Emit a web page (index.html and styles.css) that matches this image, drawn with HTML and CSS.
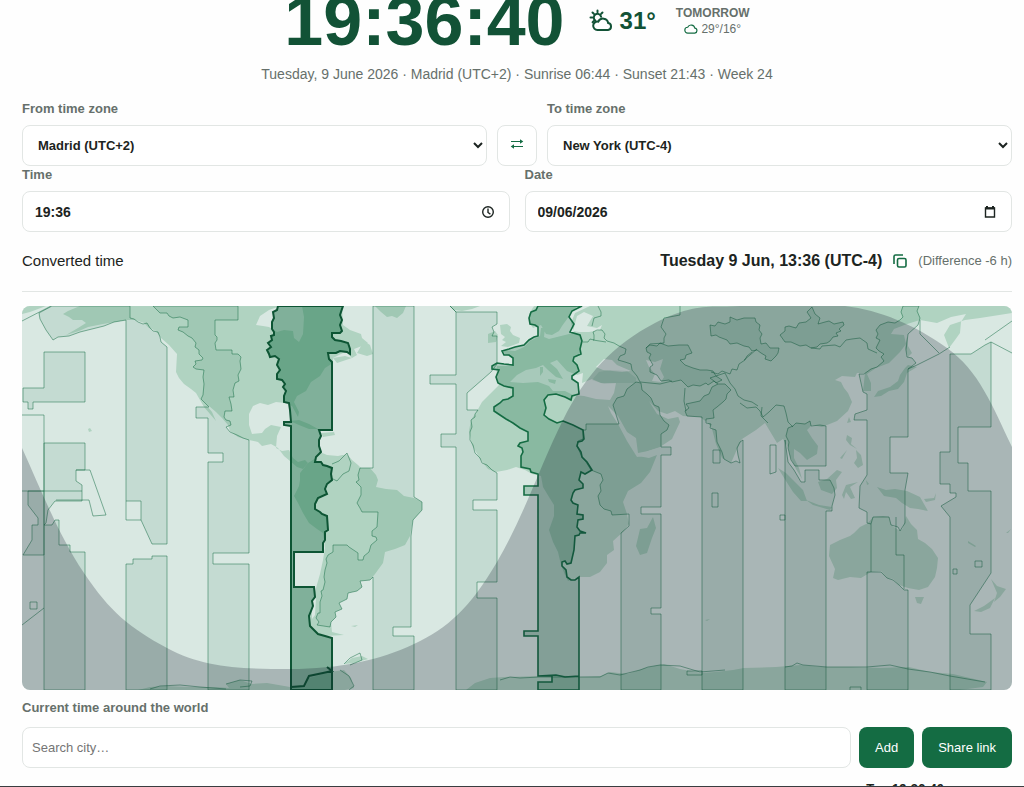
FILE: index.html
```
<!DOCTYPE html>
<html lang="en">
<head>
  <meta charset="UTF-8" />
  <meta name="viewport" content="width=device-width, initial-scale=1" />
  <title>Time Zone Converter</title>
  <link rel="stylesheet" href="styles.css">
</head>
<body>
  <main class="page">
    <header class="hero">
      <div class="clock">19:36:40</div>
      <div class="weather">
        <svg class="weather-icon" viewBox="0 0 24 24"><path d="M8.500 1.500v1.800M3.500 3.500l1.300 1.300M1.500 8.500h1.800M13.500 3.500l-1.300 1.300M3.600 13.200l1.200-1.200M6.300 11.500a3.700 3.700 0 1 1 5.800-3.800"/><path d="M8.500 21a4.200 4.200 0 1 1 .8-8.300 5.200 5.200 0 0 1 9.900 1.400A3.500 3.500 0 0 1 19 21z"/></svg>
        <span>31°</span>
      </div>
      <div class="tomorrow">
        <strong>TOMORROW</strong>
        <span><svg class="cloud-icon" viewBox="0 0 24 24"><path d="M6.500 19a5 5 0 0 1-.2-10 6.500 6.500 0 0 1 12.300 1.500A4.300 4.300 0 0 1 18.500 19z"/></svg>29°/16°</span>
      </div>
    </header>
    <p class="meta">Tuesday, 9 June 2026 · Madrid (UTC+2) · Sunrise 06:44 · Sunset 21:43 · Week 24</p>

    <div class="zones">
      <div class="group">
        <label for="fromZone">From time zone</label>
        <select id="fromZone"><option>Madrid (UTC+2)</option></select>
      </div>
      <button class="swap" type="button" aria-label="Swap time zones">
        <svg viewBox="0 0 14 12"><path d="M1 3.500h11M2 8.500h11"/><path class="head" d="M10 1.300l3.300 2.200L10 5.700zM4 6.300L.7 8.500 4 10.700z"/></svg>
      </button>
      <div class="group">
        <label for="toZone">To time zone</label>
        <select id="toZone"><option>New York (UTC-4)</option></select>
      </div>
    </div>

    <div class="when">
      <div class="group">
        <label for="time">Time</label>
        <div class="field">
          <input type="text" id="time" value="19:36" />
          <svg viewBox="0 0 14 14"><circle cx="7" cy="7" r="5.300"/><path d="M7 3.500v4l2.400 1.600"/></svg>
        </div>
      </div>
      <div class="group">
        <label for="date">Date</label>
        <div class="field">
          <input type="text" id="date" value="09/06/2026" />
          <svg viewBox="0 0 14 14"><path d="M2.500 3h9v9h-9z"/><path d="M2 3.500h10M4 1v2M10 1v2" stroke-width="2"/></svg>
        </div>
      </div>
    </div>

    <div class="converted">
      <span>Converted time</span>
      <div class="result">
        <strong>Tuesday 9 Jun, 13:36 (UTC-4)</strong>
        <button class="copy" type="button" aria-label="Copy">
          <svg viewBox="0 0 14 14"><rect x="4.500" y="4.500" width="8.500" height="8.500" rx="1.500"/><path d="M1 10V2.500A1.500 1.500 0 0 1 2.500 1H10"/></svg>
        </button>
        <span class="diff">(Difference -6 h)</span>
      </div>
    </div>

    <svg class="map" viewBox="22 306 990 384" role="img" aria-label="World time zones">
      <rect class="sea" x="22" y="306" width="990" height="384"/>

      <!-- continents -->
      <g class="land">
        <path d="M22 306H46L38 309 30 312 22 314Z"/>
        <path d="M80 306L68 311 63 314 69 317 73 320 82 320 86 323 78 328 66 335 79 331 88 327 103 324 115 322 126 320 135 320 144 323 149 328 156 331 161 338 169 345 177 354 176 372 179 378 184 384 191 389 196 393 200 400 204 407 210 414 216 421 212 412 207 406 209 406 216 412 222 418 228 425 230 431 238 437 249 440 258 442 262 446 271 444 278 448 284 456 290 461 297 467 303 469 308 463 305 460 298 462 293 458 289 450 282 451 276 448 277 436 281 427 271 425 265 429 262 433 252 434 249 425 249 414 253 406 260 403 268 405 276 402 285 403 292 406 298 417 299 412 294 402 297 396 306 391 311 382 320 376 325 368 333 363 333 358 343 353 347 353 352 358 357 355 354 349 362 346 368 343 362 338 361 334 350 330 343 325 342 306Z"/>
        <path d="M364 341L370 345 373 354 367 356 357 353ZM333 358L345 356 352 358 337 363Z"/>
        <path d="M375 306H406L403 313 397 318 392 316 387 317 381 312Z"/>
        <path d="M290 421L299 420 309 424 318 429 309 429 299 425ZM321 433L334 432 335 435 323 437Z"/>
        <path d="M300 473L308 463 316 458 320 452 327 455 338 456 347 454 352 460 358 465 361 468 370 468 376 475 378 480 376 487 386 489 397 490 404 496 414 498 422 502 422 510 413 520 411 530 410 536 405 545 395 549 385 552 383 563 375 574 370 580 360 581 362 587 357 591 348 593 347 599 339 603 342 609 335 612 336 617 331 622 332 632 344 635 325 636 316 632 310 625 309 617 313 600 316 588 320 574 323 560 325 548 323 533 317 529 309 523 303 513 298 503 294 496 299 486 300 480Z"/>
        <path d="M351 626l7-1-3 2zM450 306H480L472 309 462 311 454 310Z"/>
        <path d="M500 325L507 324 511 327 510 331 513 335 520 338 519 343 508 347 501 346 506 342 502 340 505 337 501 334ZM488 334L495 331 498 335 496 342 488 343Z"/>
        <path d="M534 306L529 314 529 322 533 328 541 325 546 334 552 335 559 331 562 326 570 315 577 306ZM590 306L575 313 571 323 574 332 569 334 557 337 549 339 544 337 545 328 541 328 540 336 530 341 524 347 515 351 503 350 505 354 513 358 513 366 497 366 496 378 499 385 490 394 482 402 477 411 471 420 469 431 472 445 480 459 488 469 496 472 507 470 516 467 525 470 532 474 541 476 543 487 549 497 554 505 554 516 549 530 553 542 558 552 561 565 565 575 568 581 579 577 590 577 600 572 607 563 607 555 614 550 613 541 623 532 629 524 627 514 623 502 628 491 641 483 650 472 657 455 649 458 638 456 648 451 660 447 672 439 680 422 678 416 671 413 682 416 700 417 708 423 712 429 716 444 722 458 731 463 738 447 742 439 756 430 765 423 771 433 777 443 783 439 788 447 790 456 796 469 802 479 799 468 794 458 794 449 800 453 807 460 817 454 818 446 812 438 807 430 812 425 822 427 837 421 848 411 852 402 848 393 844 388 841 382 835 380 842 376 855 377 857 373 865 373 863 391 871 391 871 383 867 374 876 368 889 363 900 352 906 344 904 335 891 334 894 329 907 324 920 320 937 323 951 317 966 314 961 322 960 333 955 340 949 348 944 335 950 325 965 320 980 318 1012 313V306Z"/>
        <path d="M907 337L908 346 912 353 908 357 905 348ZM905 368L908 365 917 367 907 373 904 382 898 389 889 391 881 396 874 397 878 391 890 387 898 381 900 375Z"/>
        <path d="M847 435L852 438 851 444 857 449 850 445 846 440ZM856 450L861 455 863 465 858 468 854 463 857 458ZM840 458L847 450 842 459ZM849 417L851 422 847 423Z"/>
        <path d="M778 468L786 473 793 480 803 490 807 501 801 501 793 492 786 481ZM806 500L819 505 832 507 830 510 813 505ZM818 482L827 479 837 470 842 472 836 480 837 488 832 494 821 490ZM846 485L858 482 850 487 855 498 851 499 846 492 844 499 842 495ZM877 487L886 490 895 489 907 491 920 497 928 511 918 509 910 508 902 503 896 498 884 496ZM866 480l3 4-2 1zM924 499l10-1 2-5-1 7-9 2z"/>
        <path d="M830 545L840 540 850 536 854 533 860 527 868 523 873 517 883 516 889 517 891 525 900 531 903 528 906 516 911 524 917 530 918 539 925 543 932 549 938 558 937 568 935 577 928 587 919 590 908 588 899 585 893 579 887 578 881 571 871 572 861 578 850 577 838 580 833 578 835 569 829 556ZM915 597L924 597 921 604 917 603ZM991 579L997 586 1006 589 1000 597 994 602 997 593ZM995 598L990 608 981 612 974 611 984 606Z"/>
        <path d="M653 517L656 528 652 538 647 553 640 555 636 546 640 529 647 528Z"/>
        <path d="M138 690L150 687 167 686 190 687 215 687 229 688 226 684 240 680 252 684 267 683 290 687 305 687 309 678 330 672 344 670 351 678 354 688 345 690ZM466 690L475 683 490 678 504 677 538 676 557 675 579 677 601 676 610 672 628 674 645 668 664 664 680 669 702 673 715 672 733 670 744 668 776 667 800 665 819 667 850 667 880 668 909 667 930 672 953 674 970 678 987 682 983 687 960 690ZM344 664l8-6 10-2 6 3-14 4z"/>
        <path d="M88 429l2-1 2 3-3 1zM705 620l5-1-3 2zM968 541l8 5-1 1-7-4zM1006 533l5-4-3 4z"/>
      </g>

      <!-- inland seas and gulfs -->
      <g class="sea">
        <path d="M256 325L260 316 269 310 280 306H302L304 317 303 334 299 342 294 338 293 331 284 330 277 332 269 327 263 326Z"/>
        <path d="M510 382L517 375 526 370 536 368 543 365 548 370 556 377 563 379 557 369 550 363 557 360 567 371 577 375 583 373 582 383 592 379 601 383 616 383 614 393 610 400 596 399 584 396 573 395 565 391 553 391 549 386 538 382 523 383Z"/>
        <path d="M596 367L604 359 612 360 617 365 631 371 622 372 603 370ZM646 360L655 362 663 359 660 369 664 377 661 382 652 381 655 374 649 367Z"/>
        <path d="M608 406L618 416 627 432 636 438 638 453 648 451 662 447 659 454 637 457 627 441 618 424 611 413ZM649 401L658 411 667 414 675 411 683 416 668 419 657 414Z"/>
        <path d="M577 316L584 312 593 316 587 326 597 328 602 325 600 330 589 332 579 332 573 331Z"/>
        <path d="M312 600l4-2-1 17-3 4zM328 452l18-1-2 4-14-1z"/>
      </g>
      <path class="land" d="M540 367l3 0 0 5-3 4zM548 379l8 1-1 4-6-2z"/>

      <!-- every other hour band -->
      <g class="band">
        <path d="M44 352H85V402H33V409H28V402H23V388H44Z"/>
        <path d="M44 443H85V470H76V481L82 485V501H55L48 510 46 523 44 525 52 525 55 520H59V545H70V552H85V690H44Z"/>
        <path d="M22 491H82M28 491V505L38 518V525H32V540L23 555H44V491Z"/>
        <path d="M52 306L39 313 40 319 46 330 53 340 58 337 69 336 80 332 92 329 104 326 114 322 126 320V501H141V520L152 544H167V347L161 342 160 337 158 332 153 331 150 328 147 323 143 324 138 322 134 319 130 318V306Z"/>
        <path d="M126 564H133V559H152V556H167V690H126Z"/>
        <path d="M153 306L156 309 160 313 167 313 169 316 173 318 180 317 188 320V327H179L178 330 183 332 188 336 192 338 196 343 195 347 199 350 199 354 203 358 202 360 195 361 196 364 193 367 196 369 204 370 203 377 204 384 203 395 201 399 209 407H196V418H208V453H223V462H208V690H249V564H213V553H249V440L243 438 237 435 230 432 226 427 231 425 230 421 226 420 224 417 225 411H232L231 404 229 397H234L233 390 235 383 239 381 238 375 241 369 240 361 241 357 238 354 232 354V350H216L215 343 217 340 217 337 215 335 215 320H238V306Z"/>
        <path d="M373 306H414V497L422 502 422 510 413 520 411 536V627H393V636H414V690H373V577L370 580 360 581 362 587 357 591 348 593 347 599 339 603 342 609 335 612 336 617 331 622 330 627 317 625 319 622 316 618 318 613 320 613 320 602 322 596 321 591 323 590 325 582 324 577 325 570 327 563 326 559 328 555 333 552 333 545H347L349 547 352 549 358 553V560H363L364 556 369 552 371 545 377 540 376 537 372 536 372 531 377 527 378 512H362L360 508 357 503 361 495 361 487 356 482 359 480 358 475 360 468H373Z"/>
        <path d="M450 306L456 312H497V324L492 327 494 332 492 336 497 336V364L491 372 467 393V410H478L475 414 475 417 471 420 472 427 470 432 470 440 473 445 475 453 480 458 482 463 487 465 492 470 497 473V500H473V510H497V582H477V598H497V690H456V447H441V434H456V384H430V375H456V312Z"/>
        <path d="M586 424H619L613 405 617 398 624 396 627 389 636 382 641 383 642 390 647 394 651 398 654 405 659 407 660 415 664 421 669 425 667 430 661 434V447H671V455H661V507H641V514H661V608H651V614H661V690H621V533L629 526 629 514 612 515 611 511 604 509 600 505 598 496 601 491 600 485 603 480 601 474 591 470 586 462 582 457 577 446 578 441 583 439V430H586Z"/>
        <path class="plain" d="M592 380L599 372 610 370 627 371 636 378 636 383 618 383 604 384Z"/>
        <path d="M646 348L650 345 657 346 660 343 668 346 679 345 688 345 690 349 692 353 686 355 685 359 680 360 685 365 693 368 700 370 707 370 713 371 716 376 722 380 716 383 714 381 708 385 706 383 700 386 693 385 688 387 681 380 672 382 669 380 661 381 657 375 650 372 650 367 653 365 649 358 651 354 647 352Z"/>
        <path d="M702 417L687 416 685 411 689 408 686 404 700 401 704 396 709 394 712 387 718 384 725 384 731 390 727 394 726 399 723 402 717 407 713 410 714 418 706 419 706 423 711 424 710 428 716 430 717 442 722 452 724 459 731 463 736 461 740 463 738 455 737 448 740 442 743 440V690H702Z"/>
        <path d="M710 325L715 326 718 322 725 324 730 322 730 317 737 320 744 318 755 318 756 322 760 325 759 330 762 334 760 338 761 344 766 343 770 348 779 348 778 353 776 356 771 361 765 359 766 356 761 353 757 350 752 351 749 347 744 346 737 343 730 344 727 340 719 337 716 335 711 336Z"/>
        <path d="M780 335L785 331 785 327 789 326 796 328 799 323 806 322 811 318 807 312 812 307 815 314 820 318 818 324 825 322 829 321 834 324 843 322 844 325 839 329 841 331 836 333 838 336 833 337 830 341 827 343 820 344 817 347 811 348 806 345 800 346 791 342 785 342Z"/>
        <path d="M788 428L793 426 796 423 805 424 810 421 811 426 820 425 826 426V466H795L791 460 788 448 789 442 786 436ZM785 440V690H826V511H832V506L835 495 834 488 830 480H819V470H805V482H801L794 470 788 462Z"/>
        <path d="M880 325L888 322 895 323 900 320 903 317 901 312 903 306H919L917 311 920 318 918 325 908 334 906 350 907 357 912 358 916 363 908 369V437H890V473H908L905 490V523L900 531 898 527 891 525 889 517H873L871 524 867 523V512L859 508 860 486 867 475V420H854L855 414 867 410V394L863 392 859 374 864 374 871 369 877 367 884 361 881 357 884 354 879 351 876 348 880 340 876 338 878 334 876 330Z"/>
        <path d="M867 572H881L887 578 893 580 899 585 904 590 908 590V690H867Z"/>
        <path d="M950 354H971L985 345 991 342V427H958V463H968V491H991V573L970 605V634H991V690H950V517L941 506 956 497V493H950V484H940V452H950Z"/>
        <path class="line" d="M22 321L51 306M22 415H44V491M76 470H90L106 515 93 516 89 500H56M126 501V520H141M22 625L44 608M30 602h7v7h-7zM1012 321L985 340M991 342L1012 353M920 320V334L939 353M908 369L917 365 939 354 950 347M713 450h7v13h-7zM712 493h6v14h-6zM770 445h6v27l-6 2zM780 515h5v5h-5zM953 569h4v5h-4zM975 561h7v6h-7zM871 524V572M896 517V555H904V589"/>
        <path class="line" d="M332 464L339 461 347 453 351 463 349 471 343 474 337 481 331 478M583 342L588 342 590 339 594 340 594 335 593 332 597 330 602 330 605 334 604 338 607 341 614 343 619 346 626 349 625 354 620 356 618 360 625 362 631 364 632 370 637 376 640 382M593 340L606 342M592 326L594 318 601 316 601 312 598 306M646 348L650 344 664 343 664 338 666 334 661 327 664 318 680 315V306M711 372L718 374 722 371 730 374 732 369 737 370 739 364 745 360 747 356 752 352M718 384L710 378 725 373 730 383 735 389 738 396 744 400 752 402 758 406M740 403L747 408 756 407 760 411 763 417 769 412 776 405 784 406 786 413 788 422 793 427M762 407L761 416 768 423M811 348L820 349 822 346 835 345 840 347 846 340 852 339 860 338 867 343 868 349 877 353M744 360L750 355 757 349M685 388L684 401 686 411M640 382L650 383 660 384 672 381"/>
        <path class="line" d="M150 689L160 686 180 685 200 687 226 689M226 684L240 680 252 681 250 686 240 687M500 680L510 677 520 678 540 677 578 677 600 677 608 673 620 675 640 670 648 667 660 665 680 666 700 672 725 670M687 671h15v4h-15zM785 667L792 666 797 663 803 665 827 667 867 667 890 665 908 669 930 672 950 676 985 682M850 690V687H861V690M344 664L350 658 360 653 362 660 350 665M340 670L349 676 354 686 349 690"/>
      </g>

      <!-- selected zones -->
      <path class="from" d="M538 306L536 310 531 312 529 318 530 324 535 325 538 327 538 336 534 337 529 340 524 345 515 347 509 349 502 351 504 355 509 355 513 358 513 365 504 364 497 363 492 366 492 369 499 370 496 377 498 383 504 386 513 388 513 396 508 399 503 400 500 403 494 407 494 411 500 415 506 419 513 423 520 428 528 432V441L520 443 518 446 522 448 523 452 521 456 521 467 530 469 531 472 538 474V486H524V495H538V631H524V636H538V676H552V682H538V690H579V577L575 580 571 580 567 577 566 570 562 566 562 562 565 561 567 564 571 563 574 550 575 536 579 535 580 533 586 533 580 531 577 527 578 520 583 519 583 515 577 514 578 505 573 503 571 500 573 493 575 490 583 488 583 484 579 480 581 472 585 474 592 470 587 462 582 457 581 452 577 446 578 442 582 441 584 439 583 430 573 425 563 421 557 423 549 419 544 415 546 408 544 400 548 395 556 394 565 397 571 400 572 396 579 394 578 383 572 379 572 376 579 371 577 365 573 361 574 357 581 354 580 349 582 341 580 335 570 332 574 324 569 317 572 311 582 306ZM563 421L573 425M538 676L556 675 565 677 579 676"/>
      <path class="to" d="M278 306L277 310 273 312 274 318 272 322 272 329 274 332 274 335 271 336 272 340 268 343 271 347 267 350 269 354 270 357 275 356 279 359 277 365 280 370 277 374 277 379 282 380 285 384 283 387 286 391 284 396 284 402 289 403 290 410 291 422 284 422 284 425 291 426V690H332V638L325 636 318 634 310 626 309 616 311 611 313 606 312 601 315 597 314 587H294V552H323L323 543 325 540 325 532 328 530 327 516 322 514 320 512 315 509 315 504 318 498 327 494 325 489 327 484 332 480 331 474 332 468 327 466 323 465 321 462 315 462 316 457 321 452 319 446 319 440 321 436 319 430H332V362L329 359 328 353 336 353 340 351 347 352 350 354 350 349 348 343 341 341 335 340 332 337 332 333 340 333 342 331 340 325 342 320 340 315 343 306ZM291 687L304 686 309 676 323 673 332 671 327 667"/>

      <path class="night" d="M22 448C42 492 58 534 84 573S130 628 167 648 240 669 290 669 380 660 414 644 470 608 497 562 540 466 563 420 613 345 655 323 715 308 740 306H845C880 310 915 325 947 348S992 405 1012 447V690H22Z"/>
    </svg>

    <label class="world-label" for="city">Current time around the world</label>
    <div class="search">
      <input type="text" id="city" placeholder="Search city…" />
      <button type="button">Add</button>
      <button type="button">Share link</button>
    </div>
    <div class="city-row"><strong>Tue 19:36:40</strong><span>↑</span><span>↓</span></div>
  </main>
</body>
</html>
```
FILE: styles.css
```
* { box-sizing: border-box; }
body {
  margin: 0;
  height: 100vh;
  overflow: hidden;
  border-bottom: 1px solid #3a3d40;
  background: #fefefe;
  color: #1c2421;
  font-family: "Liberation Sans", Arial, sans-serif;
  font-size: 13px;
}
.page { padding: 0 12px 0 22px; }

.hero {
  display: flex;
  justify-content: center;
  align-items: center;
  color: #125236;
}
.clock { font-size: 70px; line-height: 42px; font-weight: bold; }
.weather {
  display: flex;
  align-items: center;
  gap: 7px;
  margin: 0 20px 0 24px;
  font-size: 24px;
  font-weight: bold;
}
svg { fill: none; stroke: currentColor; }
.weather-icon { width: 24px; height: 24px; stroke-width: 2; stroke-linecap: round; }
.tomorrow {
  display: flex;
  flex-direction: column;
  align-items: center;
  font-size: 12px;
  line-height: 16px;
  color: #66706b;
}
.tomorrow span { display: flex; align-items: center; gap: 3px; }
.cloud-icon { width: 14px; height: 14px; color: #146c43; stroke-width: 2; }
.meta {
  margin: 23px 0 18px;
  font-size: 14px;
  line-height: 18px;
  text-align: center;
  color: #66706b;
}

label { display: block; font-weight: bold; line-height: 16px; color: #66706b; }
.group { flex: 1; min-width: 0; }
.zones { display: flex; align-items: flex-end; gap: 10px; }
.when { display: flex; gap: 15px; margin-top: 1px; }
select, .field, .swap, .search input {
  height: 41px;
  border: 1px solid #e2e6e4;
  border-radius: 8px;
  background: #fff;
}
select, .field { width: 100%; margin-top: 8px; }
select { font: bold 13px "Liberation Sans", Arial, sans-serif; color: #1c2421; }
select { display: block; padding: 0 0 0 11px; }
.swap {
  width: 40px;
  display: flex;
  align-items: center;
  justify-content: center;
  padding: 0 0 3px;
  color: #146c43;
}
.swap svg { width: 14px; height: 12px; }
.swap .head { fill: currentColor; stroke: none; }
.field { display: flex; align-items: center; padding: 0 14px 0 12px; }
.field input {
  flex: 1;
  min-width: 0;
  padding: 0;
  border: 0;
  outline: none;
  background: none;
  color: #1c2421;
  font: bold 14px "Liberation Sans", Arial, sans-serif;
}
.field svg { width: 14px; height: 14px; stroke-width: 1.4; }

.converted {
  display: flex;
  justify-content: space-between;
  align-items: center;
  padding: 19px 0 20px;
  border-bottom: 1px solid #e2e6e4;
  font-size: 15px;
  line-height: 20px;
}
.result { display: flex; align-items: center; gap: 11px; }
.result strong { font-size: 16px; }
.copy { display: flex; padding: 0; border: 0; background: none; color: #146c43; }
.copy svg { width: 14px; height: 14px; stroke-width: 1.6; }
.diff { font-size: 13px; color: #66706b; }

.map { display: block; width: 100%; margin: 14px 0 10px; border-radius: 8px; }
.map path, .map rect { stroke: none; }
.sea { fill: #d9e8e2; }
.land { fill: #b0d3c1; }
.map .band path { fill: rgba(20, 108, 67, 0.1); stroke: rgba(20, 108, 67, 0.5); stroke-width: 1; }
.map .band .line { fill: none; }
.map .band .plain { stroke: none; }
.map .from { fill: rgba(20, 108, 67, 0.25); stroke: #146c43; stroke-width: 1.6; }
.map .to { fill: rgba(20, 108, 67, 0.45); stroke: #0d5534; stroke-width: 2; }
.map .night { fill: rgba(15, 23, 42, 0.24); }

.world-label { margin-bottom: 11px; }
.search { display: flex; gap: 8px; }
.search input { flex: 1; min-width: 0; padding: 0 9px; font: 13px "Liberation Sans", Arial, sans-serif; }
.search input::placeholder { color: #757575; }
.search button {
  height: 41px;
  padding: 0 16px;
  border: 0;
  border-radius: 8px;
  background: #146c43;
  color: #fff;
  font: 13px "Liberation Sans", Arial, sans-serif;
  cursor: pointer;
}
.city-row {
  display: flex;
  justify-content: flex-end;
  gap: 9px;
  padding: 13px 38px 0 0;
  line-height: 16px;
}
.city-row span { width: 6px; }
```
